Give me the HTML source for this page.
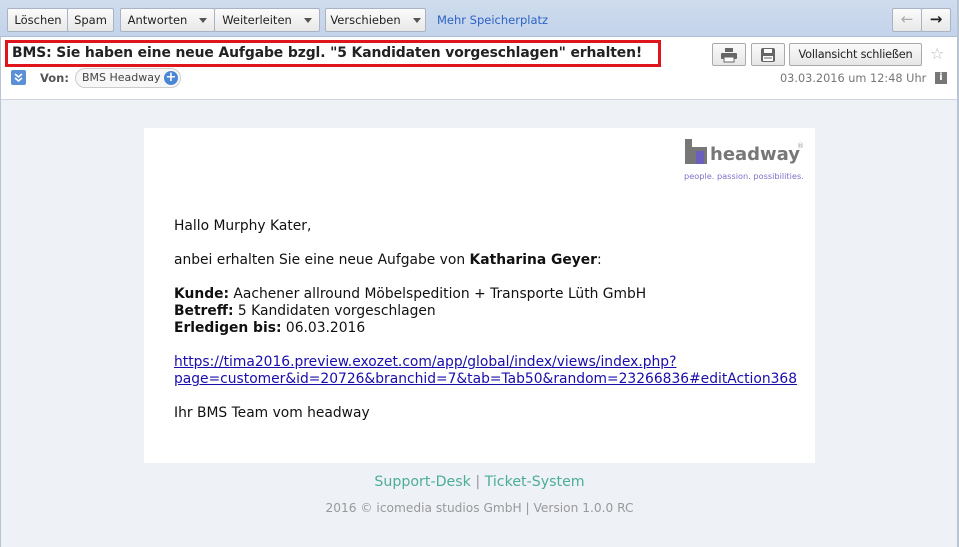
<!DOCTYPE html>
<html><head><meta charset="utf-8"><style>
*{box-sizing:border-box;margin:0;padding:0}
body{width:959px;height:547px;overflow:hidden;background:#eef1f6;font-family:"DejaVu Sans",Verdana,sans-serif;position:relative}
.tb{position:absolute;left:0;top:0;width:959px;height:37px;background:linear-gradient(#cfdcee,#c3d3ea);border-bottom:1px solid #aebfd8}
.btn{position:absolute;top:8px;height:24px;border:1px solid #a9b4c2;background:linear-gradient(#fbfbfb,#e8e8e8);font-size:11.5px;color:#222;line-height:22px;text-align:center;border-radius:2px}
.caret{display:inline-block;width:0;height:0;border-left:4px solid transparent;border-right:4px solid transparent;border-top:5px solid #555;vertical-align:middle;margin-left:12px}
.hdr{position:absolute;left:0;top:37px;width:959px;height:63px;background:#fff;border-bottom:1px solid #cfd5dd}
.wb{position:absolute;top:43px;height:23px;border:1px solid #aaa;background:linear-gradient(#fafafa,#e6e6e6);border-radius:2px;font-size:11.3px;line-height:21px;text-align:center;color:#222}
.card{position:absolute;left:144px;top:128px;width:671px;height:335px;background:#fff}
.txt{position:absolute;left:174px;font-size:13.85px;color:#111;line-height:17px}
a{color:#1a0dab;text-decoration:underline}
</style></head><body>
<div class="tb"></div>
<div class="btn" style="left:7px;width:62px">Löschen</div>
<div class="btn" style="left:67px;width:47px">Spam</div>
<div class="btn" style="left:120px;width:95px">Antworten<span class="caret"></span></div>
<div class="btn" style="left:214px;width:106px">Weiterleiten<span class="caret"></span></div>
<div class="btn" style="left:325px;width:101px">Verschieben<span class="caret"></span></div>
<div style="position:absolute;left:437px;top:13px;font-size:11.5px;color:#2b63c4">Mehr Speicherplatz</div>
<div class="btn" style="left:892px;width:30px;color:#aaa;font-size:15px;line-height:21px">&#x2190;</div>
<div class="btn" style="left:921px;width:30px;color:#222;font-size:15px;line-height:21px;font-weight:bold">&#x2192;</div>
<div class="hdr"></div>
<div style="position:absolute;left:5px;top:40px;width:656px;height:27px;border:3px solid #e0141c"></div>
<div style="position:absolute;left:12px;top:45px;font-size:13.9px;font-weight:bold;color:#222;letter-spacing:-0.1px">BMS: Sie haben eine neue Aufgabe bzgl. "5 Kandidaten vorgeschlagen" erhalten!</div>
<div class="wb" style="left:712px;width:34px"><svg width="18" height="16" viewBox="0 0 18 16" style="margin-top:3px"><rect x="5" y="1" width="8" height="4" fill="#666"/><rect x="1" y="6" width="16" height="6" rx="1" fill="#666"/><rect x="4" y="10" width="10" height="5" fill="#fff" stroke="#666"/></svg></div>
<div class="wb" style="left:751px;width:34px"><svg width="16" height="16" viewBox="0 0 16 16" style="margin-top:3px"><rect x="1" y="1" width="14" height="14" rx="2" fill="#666"/><rect x="4" y="2" width="8" height="4" fill="#fff"/><rect x="3" y="9" width="10" height="5" fill="#fff"/><line x1="4" y1="11" x2="12" y2="11" stroke="#666"/></svg></div>
<div class="wb" style="left:789px;width:133px;letter-spacing:-0.2px">Vollansicht schließen</div>
<div style="position:absolute;left:930px;top:44px;font-size:16px;color:#bbb">☆</div>
<div style="position:absolute;left:11px;top:70px;width:15px;height:15px;background:#5b8fd6;border-radius:2px"><svg width="15" height="15"><path d="M4 4l3.5 3 3.5-3M4 8l3.5 3 3.5-3" stroke="#fff" stroke-width="1.6" fill="none"/></svg></div>
<div style="position:absolute;left:40px;top:71px;font-size:11.5px;font-weight:bold;color:#555">Von:</div>
<div style="position:absolute;left:75px;top:68px;width:106px;height:20px;border:1px solid #ccc;border-radius:10px;background:#f7f7f7;font-size:11px;color:#444;line-height:18px;padding-left:6px">BMS Headway<span style="position:absolute;right:2px;top:2px;width:14px;height:14px;border-radius:50%;background:#4a86d6;color:#fff;font-weight:bold;font-size:13px;line-height:14px;text-align:center">+</span></div>
<div style="position:absolute;left:780px;top:72px;font-size:11.3px;color:#777">03.03.2016 um 12:48 Uhr</div>
<div style="position:absolute;left:935px;top:72px;width:12px;height:12px;background:#777;color:#fff;font-size:10px;font-weight:bold;text-align:center;line-height:12px">i</div>
<div style="position:absolute;left:0;top:37px;width:1px;height:510px;background:#b9c4d2"></div>
<div style="position:absolute;left:957px;top:0;width:2px;height:547px;background:#b9c4d2"></div>
<div class="card"></div>
<div style="position:absolute;left:685px;top:139px;width:22px;height:25px"><div style="position:absolute;left:0;top:0;width:7px;height:25px;background:#777"></div><div style="position:absolute;left:7px;top:8px;width:15px;height:17px;background:#777"></div><div style="position:absolute;left:11px;top:12px;width:8px;height:13px;background:#6a5fbf"></div></div>
<div style="position:absolute;left:710px;top:144px;font-size:18px;font-weight:bold;color:#777">headway</div>
<div style="position:absolute;left:797px;top:142px;font-size:7px;color:#999">®</div>
<div style="position:absolute;left:684px;top:171px;font-size:8.2px;color:#7d73c8">people. passion. possibilities.</div>
<div class="txt" style="top:218px">Hallo Murphy Kater,</div>
<div class="txt" style="top:252px">anbei erhalten Sie eine neue Aufgabe von <b>Katharina Geyer</b>:</div>
<div class="txt" style="top:286px"><b>Kunde:</b> Aachener allround Möbelspedition + Transporte Lüth GmbH<br><b>Betreff:</b> 5 Kandidaten vorgeschlagen<br><b>Erledigen bis:</b> 06.03.2016</div>
<div class="txt" style="top:354px"><a>https://tima2016.preview.exozet.com/app/global/index/views/index.php?<br>page=customer&amp;id=20726&amp;branchid=7&amp;tab=Tab50&amp;random=23266836#editAction368</a></div>
<div class="txt" style="top:405px">Ihr BMS Team vom headway</div>
<div style="position:absolute;left:0;width:959px;top:474px;text-align:center;font-size:14.2px;color:#4cae96">Support-Desk <span style="color:#999">|</span> Ticket-System</div>
<div style="position:absolute;left:0;width:959px;top:501px;text-align:center;font-size:12.2px;color:#999">2016 © icomedia studios GmbH | Version 1.0.0 RC</div>
</body></html>
